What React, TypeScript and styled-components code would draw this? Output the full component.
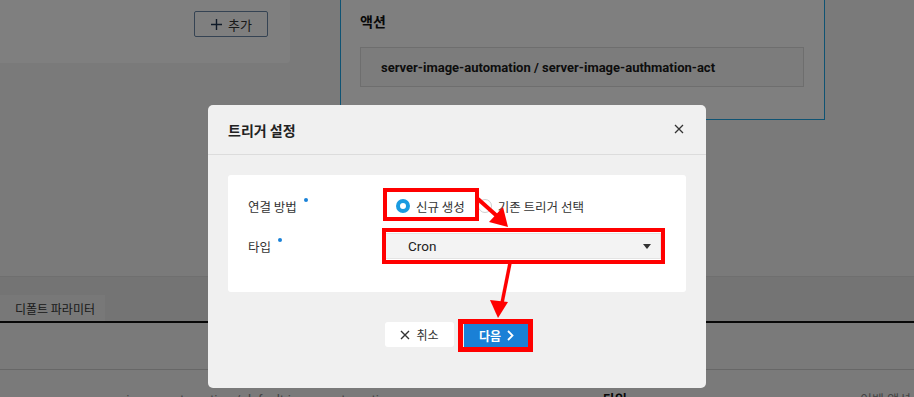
import React from "react";
import styled, { createGlobalStyle } from "styled-components";

const GlobalStyle = createGlobalStyle`
  html, body {
    margin: 0;
    padding: 0;
    background: #f5f5f5;
    overflow: hidden;
  }
  * {
    box-sizing: border-box;
  }
  body {
    font-family: Roboto, "Noto Sans CJK KR", sans-serif;
    color: #333;
  }
`;

const Page = styled.div`
  width: 914px;
  height: 397px;
  overflow: hidden;
`;

const TopRow = styled.div`
  display: flex;
  align-items: flex-start;
  height: 276px;
`;

const LeftCard = styled.div`
  width: 290px;
  height: 63px;
  background: #fff;
  border-bottom-right-radius: 4px;
  display: flex;
  justify-content: flex-end;
  padding: 11px 22px 0 0;
`;

const AddButton = styled.button`
  display: flex;
  align-items: center;
  gap: 6px;
  height: 26px;
  padding: 0 15px 0 16px;
  border: 1px solid #6b87a6;
  border-radius: 2px;
  background: #fff;
  font-family: "Noto Sans CJK KR", sans-serif;
  font-size: 13px;
  color: #333;
`;

const ActionPanel = styled.div`
  margin-left: 50px;
  width: 485px;
  height: 120px;
  background: #fff;
  border: 1px solid #1fa6e6;
  border-top: none;
  padding: 11px 20px 0 19px;
`;

const PanelTitle = styled.div`
  font-family: "Noto Sans CJK KR", sans-serif;
  font-weight: 700;
  font-size: 14px;
  color: #111;
  line-height: 20px;
`;

const ActionBox = styled.div`
  margin-top: 16px;
  height: 40px;
  border: 1px solid #dcdcdc;
  background: #f8f8f8;
  display: flex;
  align-items: center;
  padding-left: 20px;
  font-family: Roboto, sans-serif;
  font-weight: 700;
  font-size: 13px;
  color: #1a1a1a;
`;

const TabBar = styled.div`
  height: 47px;
  background: #e9e9e9;
  border-top: 1px solid #dedede;
  display: flex;
  align-items: flex-end;
  border-bottom: 2px solid #111;
`;

const Tab = styled.div`
  width: 105px;
  height: 26px;
  background: #f1f1f1;
  display: flex;
  align-items: center;
  padding-left: 15px;
  font-family: "Noto Sans CJK KR", sans-serif;
  font-size: 12px;
  color: #333;
`;

const Section = styled.div`
  height: 47px;
  border-bottom: 1px solid #cfcfcf;
`;

const ParamRow = styled.div`
  display: flex;
  padding-top: 20px;
  font-size: 13px;
  line-height: 20px;
`;

const ParamCell = styled.div<{ $w: number; $bold?: boolean }>`
  width: ${(p) => p.$w}px;
  font-weight: ${(p) => (p.$bold ? 700 : 400)};
  color: ${(p) => (p.$bold ? "#111" : "#888")};
  white-space: nowrap;
`;

const Overlay = styled.div`
  position: fixed;
  inset: 0;
  background: rgba(0, 0, 0, 0.5);
  display: flex;
  justify-content: center;
  align-items: flex-start;
  padding-top: 105px;
`;

const Modal = styled.div`
  width: 498px;
  background: #f0f0f0;
  border-radius: 5px;
`;

const ModalHeader = styled.div`
  height: 50px;
  padding: 0 20px;
  display: flex;
  align-items: center;
  justify-content: space-between;
  border-bottom: 1px solid #dcdcdc;
`;

const ModalTitle = styled.div`
  font-family: "Noto Sans CJK KR", sans-serif;
  font-weight: 700;
  font-size: 14px;
  color: #222;
`;

const CloseButton = styled.button`
  border: none;
  background: none;
  padding: 0;
  display: flex;
  width: 12px;
  height: 12px;
`;

const ModalBody = styled.div`
  padding: 20px 20px 10px;
`;

const FormCard = styled.div`
  background: #fff;
  border-radius: 3px;
  padding: 18px 20px 33px;
  display: flex;
  flex-direction: column;
  gap: 14px;
`;

const FormRow = styled.div`
  display: grid;
  grid-template-columns: 137px 1fr;
  align-items: center;
  height: 26px;
`;

const Label = styled.div`
  display: flex;
  align-items: flex-start;
  font-family: "Noto Sans CJK KR", sans-serif;
  font-size: 12.5px;
  color: #333;
`;

const RequiredDot = styled.span`
  width: 4px;
  height: 4px;
  border-radius: 50%;
  background: #1a82d8;
  margin: 1px 0 0 7px;
`;

const RadioGroup = styled.div`
  display: flex;
  align-items: center;
  padding-left: 11px;
`;

const RadioOption = styled.label`
  display: flex;
  align-items: center;
  gap: 6px;
  margin-right: 13px;
  font-family: "Noto Sans CJK KR", sans-serif;
  font-size: 12.5px;
  color: #333;
`;

const RadioCircle = styled.span<{ $checked?: boolean }>`
  width: 14px;
  height: 14px;
  border-radius: 50%;
  background: #fff;
  border: ${(p) => (p.$checked ? "4px solid #1a9be0" : "1px solid #cfcfcf")};
`;

const Select = styled.div`
  height: 26px;
  width: 276px;
  background: #f3f3f3;
  border: 1px solid #e4e4e4;
  display: flex;
  align-items: center;
  justify-content: space-between;
  padding: 0 9px 0 22px;
  font-family: Roboto, sans-serif;
  font-size: 13.5px;
  color: #222;
`;

const Caret = styled.span`
  width: 0;
  height: 0;
  border-left: 4px solid transparent;
  border-right: 4px solid transparent;
  border-top: 5px solid #333;
`;

const ModalFooter = styled.div`
  display: flex;
  justify-content: center;
  align-items: flex-start;
  gap: 10px;
  padding: 20px 0 40px;
`;

const FooterButton = styled.button<{ $primary?: boolean }>`
  display: flex;
  align-items: center;
  justify-content: center;
  gap: 6px;
  height: 25px;
  width: ${(p) => (p.$primary ? "65px" : "69px")};
  border: none;
  border-radius: ${(p) => (p.$primary ? "0" : "3px")};
  background: ${(p) => (p.$primary ? "#1a80d6" : "#fff")};
  color: ${(p) => (p.$primary ? "#fff" : "#333")};
  font-family: "Noto Sans CJK KR", sans-serif;
  font-weight: ${(p) => (p.$primary ? 700 : 400)};
  font-size: 12px;
  margin-top: ${(p) => (p.$primary ? "1px" : "0")};
`;

const Annotations = styled.svg`
  position: fixed;
  left: 0;
  top: 0;
  pointer-events: none;
`;

const CrossIcon = ({ size, color, width }: { size: number; color: string; width: number }) => (
  <svg width={size} height={size} viewBox="0 0 10 10">
    <path d="M1 1 L9 9 M9 1 L1 9" stroke={color} strokeWidth={width} />
  </svg>
);

export default function App() {
  return (
    <>
      <GlobalStyle />
      <Page>
        <TopRow>
          <LeftCard>
            <AddButton>
              <svg width="11" height="11" viewBox="0 0 11 11">
                <path d="M5.5 0 V11 M0 5.5 H11" stroke="#1f3550" strokeWidth="1.4" />
              </svg>
              추가
            </AddButton>
          </LeftCard>
          <ActionPanel>
            <PanelTitle>액션</PanelTitle>
            <ActionBox>server-image-automation / server-image-authmation-act</ActionBox>
          </ActionPanel>
        </TopRow>
        <TabBar>
          <Tab>디폴트 파라미터</Tab>
        </TabBar>
        <Section />
        <ParamRow>
          <ParamCell $w={87} />
          <ParamCell $w={516}>server-image-automation / default-image-automation-param</ParamCell>
          <ParamCell $w={257} $bold>
            타입
          </ParamCell>
          <ParamCell $w={54}>이벤 액션</ParamCell>
        </ParamRow>
      </Page>

      <Overlay>
        <Modal>
          <ModalHeader>
            <ModalTitle>트리거 설정</ModalTitle>
            <CloseButton>
              <CrossIcon size={10} color="#333" width={1.3} />
            </CloseButton>
          </ModalHeader>
          <ModalBody>
            <FormCard>
              <FormRow>
                <Label>
                  연결 방법
                  <RequiredDot />
                </Label>
                <RadioGroup>
                  <RadioOption>
                    <RadioCircle $checked />
                    신규 생성
                  </RadioOption>
                  <RadioOption>
                    <RadioCircle />
                    기존 트리거 선택
                  </RadioOption>
                </RadioGroup>
              </FormRow>
              <FormRow>
                <Label>
                  타입
                  <RequiredDot />
                </Label>
                <Select>
                  Cron
                  <Caret />
                </Select>
              </FormRow>
            </FormCard>
          </ModalBody>
          <ModalFooter>
            <FooterButton>
              <CrossIcon size={10} color="#333" width={1.4} />
              취소
            </FooterButton>
            <FooterButton $primary>
              다음
              <svg width="7" height="11" viewBox="0 0 7 11">
                <path d="M1 1 L5.5 5.5 L1 10" stroke="#fff" strokeWidth="1.8" fill="none" />
              </svg>
            </FooterButton>
          </ModalFooter>
        </Modal>
      </Overlay>

      <Annotations width="914" height="397" viewBox="0 0 914 397">
        <g fill="none" stroke="#ff0000">
          <rect x="385" y="190" width="92" height="29" strokeWidth="4" />
          <rect x="384" y="230" width="279" height="32" strokeWidth="4" />
          <rect x="460.5" y="321.5" width="70" height="28" strokeWidth="5" />
          <line x1="478" y1="199" x2="497" y2="216" strokeWidth="4" />
          <line x1="510" y1="263" x2="502" y2="303" strokeWidth="3.5" />
        </g>
        <g fill="#ff0000">
          <polygon points="508,227 489,222 503,207" />
          <polygon points="498,318 490,300 508,302" />
        </g>
      </Annotations>
    </>
  );
}
